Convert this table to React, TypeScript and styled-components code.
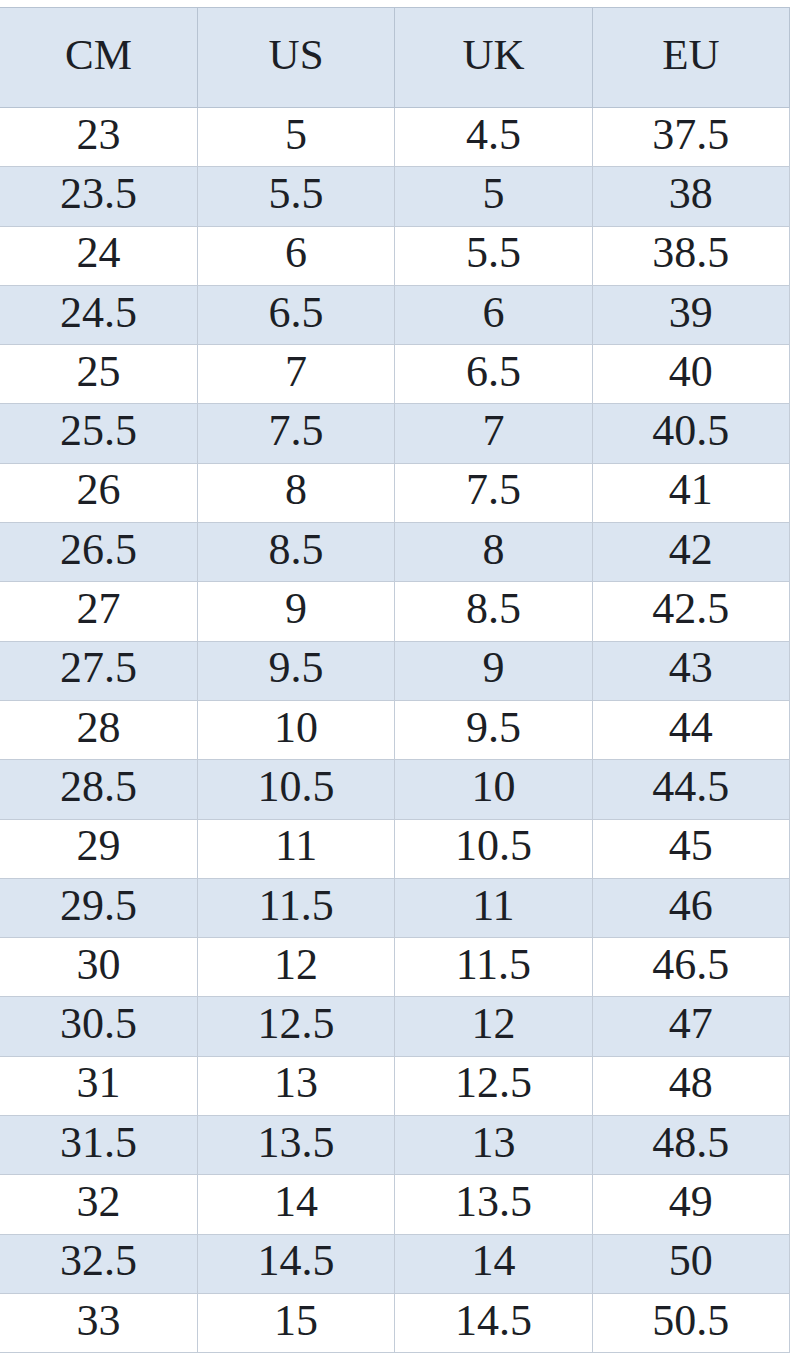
import React from 'react';
import styled, { createGlobalStyle } from 'styled-components';

const GlobalStyle = createGlobalStyle`
  html, body {
    margin: 0;
    padding: 0;
    background: #ffffff;
  }
`;

const ChartContainer = styled.div`
  width: 794px;
  padding-top: 7px;
  background: #ffffff;
`;

const Table = styled.table`
  width: 790px;
  border-collapse: collapse;
  table-layout: fixed;
  font-family: "Liberation Serif", "Times New Roman", serif;
  color: #1c1f26;
`;

const TableHeader = styled.th`
  height: 93px;
  padding: 0 0 6px;
  background-color: #dbe5f1;
  font-weight: normal;
  font-size: 43px;
  text-align: center;
  vertical-align: middle;
  border: 1px solid #b7c3d2;
  border-left: none;
`;

const TableRow = styled.tr<{ $shaded: boolean }>`
  height: 59.3px;
  background-color: ${(p) => (p.$shaded ? '#dbe5f1' : '#ffffff')};
`;

const TableCell = styled.td`
  padding: 0 0 5px;
  font-size: 44px;
  line-height: 1;
  text-align: center;
  vertical-align: middle;
  border: 1px solid #c3ccd8;
  border-left: none;
`;

const columns = ['CM', 'US', 'UK', 'EU'];

const sizes = [
  ['23', '5', '4.5', '37.5'],
  ['23.5', '5.5', '5', '38'],
  ['24', '6', '5.5', '38.5'],
  ['24.5', '6.5', '6', '39'],
  ['25', '7', '6.5', '40'],
  ['25.5', '7.5', '7', '40.5'],
  ['26', '8', '7.5', '41'],
  ['26.5', '8.5', '8', '42'],
  ['27', '9', '8.5', '42.5'],
  ['27.5', '9.5', '9', '43'],
  ['28', '10', '9.5', '44'],
  ['28.5', '10.5', '10', '44.5'],
  ['29', '11', '10.5', '45'],
  ['29.5', '11.5', '11', '46'],
  ['30', '12', '11.5', '46.5'],
  ['30.5', '12.5', '12', '47'],
  ['31', '13', '12.5', '48'],
  ['31.5', '13.5', '13', '48.5'],
  ['32', '14', '13.5', '49'],
  ['32.5', '14.5', '14', '50'],
  ['33', '15', '14.5', '50.5'],
];

const App = () => {
  return (
    <ChartContainer>
      <GlobalStyle />
      <Table>
        <thead>
          <tr>
            {columns.map((c) => (
              <TableHeader key={c}>{c}</TableHeader>
            ))}
          </tr>
        </thead>
        <tbody>
          {sizes.map((row, index) => (
            <TableRow key={index} $shaded={index % 2 === 1}>
              {row.map((value, i) => (
                <TableCell key={i}>{value}</TableCell>
              ))}
            </TableRow>
          ))}
        </tbody>
      </Table>
    </ChartContainer>
  );
};

export default App;
